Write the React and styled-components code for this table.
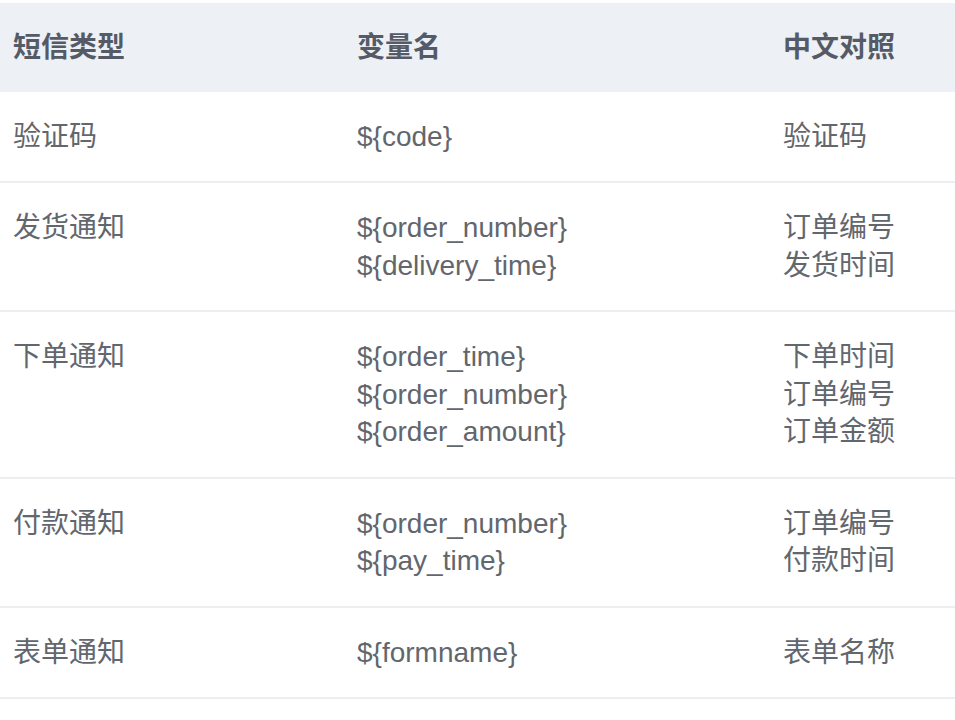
import React from 'react';
import styled, { createGlobalStyle } from 'styled-components';

const GlobalStyle = createGlobalStyle`
  html, body {
    margin: 0;
    padding: 0;
    background: #fff;
  }
  body {
    font-family: "Liberation Sans", "Noto Sans CJK SC", sans-serif;
  }
`

const Wrapper = styled.div`
  padding-top: 3px;
  width: 955px;
`

const Table = styled.table`
  width: 100%;
  border-collapse: collapse;
  table-layout: fixed;
  font-size: 28px;
  line-height: 37.5px;
`

const Th = styled.th`
  box-sizing: border-box;
  width: ${props => props.width || 'auto'};
  background-color: #edf0f4;
  color: #555b66;
  font-weight: 700;
  text-align: left;
  padding: 26px 13px 25px;
  white-space: nowrap;
`

const Td = styled.td`
  box-sizing: border-box;
  color: #62666d;
  vertical-align: top;
  padding: 26px 13px;
  border-bottom: 2.5px solid #eceef1;
  white-space: nowrap;
`

const Line = styled.div`
  display: block;
`

const rows = [
  { type: '验证码', vars: ['${code}'], names: ['验证码'] },
  { type: '发货通知', vars: ['${order_number}', '${delivery_time}'], names: ['订单编号', '发货时间'] },
  { type: '下单通知', vars: ['${order_time}', '${order_number}', '${order_amount}'], names: ['下单时间', '订单编号', '订单金额'] },
  { type: '付款通知', vars: ['${order_number}', '${pay_time}'], names: ['订单编号', '付款时间'] },
  { type: '表单通知', vars: ['${formname}'], names: ['表单名称'] },
]

export default function App() {
  return (
    <Wrapper>
      <GlobalStyle />
      <Table>
        <thead>
          <tr>
            <Th width="344px">短信类型</Th>
            <Th width="426px">变量名</Th>
            <Th>中文对照</Th>
          </tr>
        </thead>
        <tbody>
          {rows.map(row => (
            <tr key={row.type}>
              <Td>{row.type}</Td>
              <Td>
                {row.vars.map(v => <Line key={v}>{v}</Line>)}
              </Td>
              <Td>
                {row.names.map(n => <Line key={n}>{n}</Line>)}
              </Td>
            </tr>
          ))}
        </tbody>
      </Table>
    </Wrapper>
  )
}
